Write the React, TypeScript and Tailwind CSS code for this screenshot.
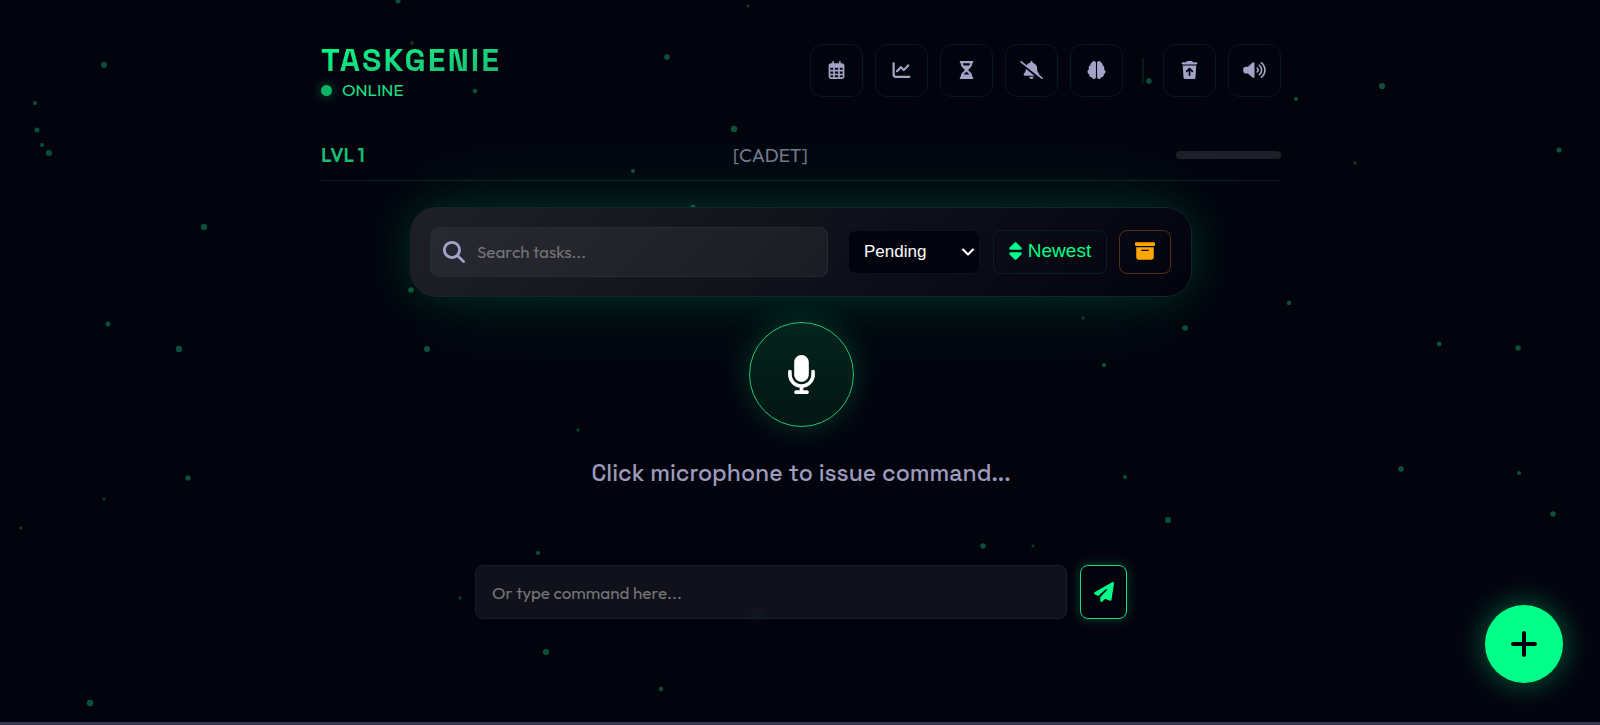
import { useState, type ComponentType } from "react";
import { ChevronDown } from "lucide-react";
import {
  FaBellSlash,
  FaBoxArchive,
  FaBrain,
  FaChartLine,
  FaHourglassHalf,
  FaMagnifyingGlass,
  FaMicrophone,
  FaPaperPlane,
  FaPlus,
  FaSort,
  FaTrashArrowUp,
  FaVolumeHigh,
} from "react-icons/fa6";

type IconProps = { className?: string };

// x, y, radius
const particles: [number, number, number][] = [
  [104, 65, 3], [35, 103, 2], [37, 130, 2.5], [42, 145, 2], [49, 153, 3],
  [204, 227, 3.2], [108, 324, 2.5], [179, 349, 3.2], [188, 478, 2.7], [104, 499, 1.5],
  [21, 528, 1.7], [90, 703, 3.3], [398, 1, 2.5], [412, 43, 1.8], [475, 91, 2.3],
  [667, 57, 2.8], [748, 6, 1.6], [734, 129, 3.2], [633, 171, 2], [693, 207, 2.5],
  [411, 290, 2.8], [427, 349, 3], [578, 430, 1.8], [538, 553, 2], [460, 598, 1.8],
  [546, 652, 3.1], [661, 689, 2.3], [757, 615, 7], [983, 546, 2.7], [1033, 546, 1.6],
  [1125, 477, 2], [1168, 520, 3.1], [1104, 365, 2.1], [1083, 318, 1.6], [1185, 328, 2.8],
  [1289, 303, 2.3], [1149, 81, 2.7], [1296, 99, 2], [1355, 163, 1.7], [1382, 86, 3.1],
  [1559, 150, 2.6], [1439, 344, 2.4], [1518, 348, 2.7], [1401, 469, 2.8], [1519, 473, 2.1],
  [1553, 514, 2.8],
];

function particleOpacity(r: number) {
  if (r > 5) return 0.03;
  return r < 2 ? 0.28 : 0.38;
}

function Particles() {
  return (
    <svg className="pointer-events-none absolute inset-0 h-full w-full" aria-hidden="true">
      {particles.map(([x, y, r]) => (
        <circle key={`${x}-${y}`} cx={x} cy={y} r={r} fill="#14cf85" opacity={particleOpacity(r)} />
      ))}
    </svg>
  );
}

function CalendarGrid({ className }: IconProps) {
  return (
    <svg viewBox="0 0 448 512" fill="currentColor" className={className} aria-hidden="true">
      <path d="M152 24c0-13.3-10.7-24-24-24s-24 10.7-24 24V64H64C28.7 64 0 92.7 0 128v16 48V448c0 35.3 28.7 64 64 64H384c35.3 0 64-28.7 64-64V192 144 128c0-35.3-28.7-64-64-64H344V24c0-13.3-10.7-24-24-24s-24 10.7-24 24V64H152V24zM48 192h80v56H48V192zm0 104h80v64H48V296zm128 0h96v64H176V296zm144 0h80v64H320V296zm80-48H320V192h80v56zm0 160v40c0 8.8-7.2 16-16 16H320V408h80zm-128 0v56H176V408h96zm-144 0v56H64c-8.8 0-16-7.2-16-16V408h80zM272 248H176V192h96v56z" />
    </svg>
  );
}

function ToolButton({ icon: Icon, label }: { icon: ComponentType<IconProps>; label: string }) {
  return (
    <button
      aria-label={label}
      className="flex h-[53px] w-[53px] items-center justify-center rounded-xl border border-[#06181c] pb-0.5 text-[#a3a3c8] hover:border-[#00ff88]"
    >
      <Icon className="h-[18px] w-[23px]" />
    </button>
  );
}

export default function App() {
  const [query, setQuery] = useState("");
  const [command, setCommand] = useState("");
  const [filter, setFilter] = useState("pending");

  return (
    <div className="relative flex min-h-screen flex-col overflow-hidden bg-[#03030e] font-[Outfit,Lato,sans-serif]">
      <Particles />

      <main className="relative mx-auto flex w-full max-w-[962px] flex-1 flex-col items-center pt-11 pl-0.5">
        <header className="flex w-full items-start justify-between">
          <div>
            <h1 className="bg-linear-to-br from-[#00ff88] to-[#1cb573] bg-clip-text font-['Space_Grotesk',Inter,sans-serif] text-[32px] leading-8 font-bold tracking-[2px] text-transparent">
              TASKGENIE
            </h1>
            <div className="flex items-center gap-[10px] text-[17px] leading-7 text-[#1fdc85]">
              <span className="h-[11px] w-[11px] rounded-full bg-[#0bb566] shadow-[0_0_12px_#00ff8866]" />
              ONLINE
            </div>
          </div>
          <nav className="flex items-center gap-3">
            <ToolButton icon={CalendarGrid} label="Calendar" />
            <ToolButton icon={FaChartLine} label="Statistics" />
            <ToolButton icon={FaHourglassHalf} label="Timer" />
            <ToolButton icon={FaBellSlash} label="Notifications" />
            <ToolButton icon={FaBrain} label="Focus" />
            <span className="mx-[7px] h-[26px] w-0.5 bg-[#051a1a]" />
            <ToolButton icon={FaTrashArrowUp} label="Trash" />
            <ToolButton icon={FaVolumeHigh} label="Sound" />
          </nav>
        </header>

        <section className="mt-[26px] flex w-full items-center justify-between border-b border-[#0b2225] py-[13px] text-[19px] leading-6">
          <div className="font-semibold text-[#17bd70]">LVL 1</div>
          <div className="text-[#77778f]">[CADET]</div>
          <div className="h-2 w-[105px] rounded-full bg-[#1f1f29]" />
        </section>

        <section className="mt-[26px] flex w-full max-w-[782px] items-center rounded-[26px] border border-[#12272b] bg-linear-[135deg] from-[#1f1f28] to-[#03030e] py-[19px] pr-5 pl-[19px] shadow-[0_0_44px_#00ff8822,0_0_120px_#00ff881c]">
          <label className="flex h-[50px] flex-1 items-center gap-3 rounded-lg border border-[#1b2f36] bg-white/5 px-3 text-[#a3a3c8]">
            <FaMagnifyingGlass className="h-[22px] w-[22px]" />
            <input
              type="text"
              aria-label="Search tasks"
              value={query}
              onChange={(e) => setQuery(e.target.value)}
              placeholder="Search tasks..."
              className="min-w-0 flex-1 bg-transparent text-[17px] text-white outline-none placeholder:text-[#757575]"
            />
          </label>
          <div className="relative ml-5">
            <select
              aria-label="Filter tasks"
              value={filter}
              onChange={(e) => setFilter(e.target.value)}
              className="block h-11 w-[132px] appearance-none rounded-lg border border-[#07151a] bg-[#03030d] pl-[15px] font-['Liberation_Sans',sans-serif] text-[17px] text-white"
            >
              <option value="pending">Pending</option>
              <option value="completed">Completed</option>
              <option value="all">All</option>
            </select>
            <ChevronDown
              className="pointer-events-none absolute top-3 right-0.5 h-5 w-5 text-white"
              strokeWidth={2.5}
            />
          </div>
          <button className="ml-[13px] flex h-11 w-[114px] items-center justify-center gap-[6px] rounded-lg border border-[#0a1f24] pb-0.5 font-['Liberation_Sans',sans-serif] text-[19px] text-[#00ff88]">
            <FaSort className="h-5 w-[13px]" />
            Newest
          </button>
          <button
            aria-label="Archive"
            className="ml-3 flex h-11 w-[52px] items-center justify-center rounded-lg border border-[#4d340b] pb-0.5 text-[#ffa500]"
          >
            <FaBoxArchive className="h-5 w-5" />
          </button>
        </section>

        <button
          aria-label="Start voice command"
          className="mt-[25px] flex h-[105px] w-[105px] items-center justify-center rounded-full border border-[#1fc777] bg-linear-to-b from-[#03241c] to-[#031613] text-white shadow-[0_0_32px_#00ff8833]"
        >
          <FaMicrophone className="h-[39px] w-[39px]" />
        </button>
        <p className="mt-[30px] font-['Space_Grotesk',Inter,sans-serif] text-[23px] leading-8 font-medium text-[#9c9cbd]">
          Click microphone to issue command...
        </p>

        <form
          onSubmit={(e) => e.preventDefault()}
          className="mt-[76px] flex w-full max-w-[652px] gap-[13px]"
        >
          <input
            type="text"
            aria-label="Command"
            value={command}
            onChange={(e) => setCommand(e.target.value)}
            placeholder="Or type command here..."
            className="h-[54px] min-w-0 flex-1 rounded-lg border border-[#10232a] bg-white/6 px-4 text-[17px] text-white outline-none placeholder:text-[#757575]"
          />
          <button
            type="submit"
            aria-label="Send command"
            className="flex w-[47px] items-center justify-center rounded-lg border border-[#1fd681] text-[#00ff88] shadow-[0_0_12px_#00ff8840]"
          >
            <FaPaperPlane className="h-5 w-5" />
          </button>
        </form>
      </main>

      <footer className="relative h-[3px] bg-[#34374e]" />

      <button
        aria-label="Add task"
        className="fixed right-[37px] bottom-[42px] flex h-[78px] w-[78px] items-center justify-center rounded-full bg-[#00ff88] text-[#03030d] shadow-[0_0_32px_#00ff8866]"
      >
        <FaPlus className="h-8 w-8" />
      </button>
    </div>
  );
}
